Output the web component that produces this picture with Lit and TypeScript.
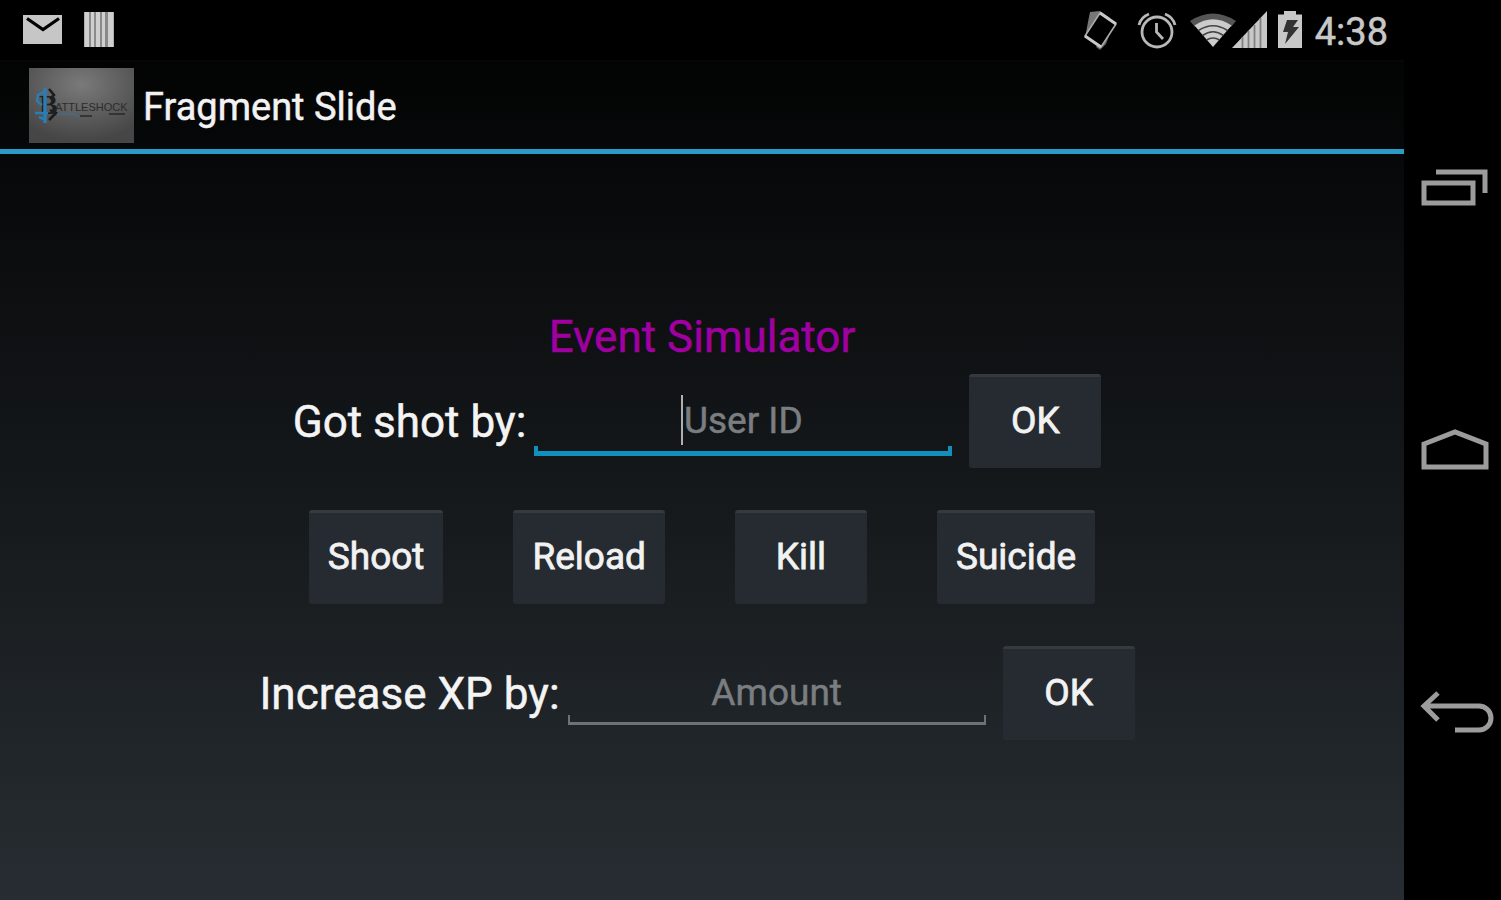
import { LitElement, html, css, svg } from "lit";
import { customElement } from "lit/decorators.js";

@customElement("status-bar")
class StatusBar extends LitElement {
  static styles = css`
    :host {
      display: flex;
      align-items: center;
      justify-content: space-between;
      height: 60px;
      padding: 0 16px 0 20px;
      box-sizing: border-box;
      background: #000;
      color: #c8c8c8;
    }
    .group {
      display: flex;
      align-items: center;
    }
    .notifications {
      gap: 16px;
    }
    svg {
      display: block;
    }
    .time {
      font-size: 38px;
      line-height: 56px;
      padding-top: 3px;
      margin-left: 4px;
      -webkit-text-stroke: 0.5px #c8c8c8;
    }
  `;

  render() {
    return html`
      <div class="group notifications">
        <svg width="44" height="44" viewBox="0 0 44 44" role="img" aria-label="New mail">
          <rect x="3" y="7" width="39" height="29" fill="#c6c6c6" />
          <path d="M7 10.500L23 21.500L39 10.500" fill="none" stroke="#000" stroke-width="3.200" />
        </svg>
        <svg width="36" height="44" viewBox="0 0 36 44" role="img" aria-label="Barcode">
          <rect x="4" y="4" width="30" height="35" fill="#8a8a8a" />
          <path d="M4.500 4h4.500v35h-4.500zM11 4h3v35h-3zM16 4h4v35h-4zM22 4h3v35h-3zM28 4h5.500v35h-5.500z" fill="#cfcfcf" />
        </svg>
      </div>
      <div class="group">
        <svg width="232" height="44" viewBox="0 0 232 44" role="img" aria-label="Rotation, alarm, wi-fi, signal, battery">
          <path d="M11 4L21 3L31 10L22 12L11 22L6 30L9 14Z" fill="#777" />
          <path d="M34 17L27 36L21 42L17 39Z" fill="#666" />
          <path d="M21 5L37 16L22 39L6 28Z" fill="#000" stroke="#aaa" stroke-width="1.600" stroke-linejoin="round" />
          <path d="M6 28L22 39M21 5L37 16" stroke="#c8c8c8" stroke-width="3" />

          <g fill="none" stroke="#b8b8b8">
            <circle cx="78" cy="24" r="15" stroke-width="2.800" />
            <path d="M77.500 15V24L84 31" stroke-width="2.800" />
            <path d="M60 17Q62 9 70 6M86 6Q94 9 96 17" stroke-width="2.800" />
          </g>

          <path d="M111 13Q134 -2 157 13L152 19Q134 8 116 19Z" fill="#555" />
          <path d="M115.500 17.500Q134 5 152.500 17.500L134 39Z" fill="#ccc" />
          <g fill="none" stroke="#444" stroke-width="1.600">
            <path d="M119.500 22.500Q134 13 148.500 22.500" />
            <path d="M123.500 27.500Q134 20 144.500 27.500" />
            <path d="M127.500 32Q134 28 140.500 32" />
          </g>

          <path d="M153 40L188 3V40Z" fill="#c8c8c8" />
          <path d="M163.500 29V40M169.500 23V40M175.500 17V40M181.500 10V40" stroke="#808080" stroke-width="1.800" />

          <path d="M199 6.500h6V3h12v3.500h6V40h-24z" fill="#c8c8c8" />
          <path d="M208 12h11l-5 7h6l-14 17l3-12h-5z" fill="#333" />
        </svg>
        <span class="time">4:38</span>
      </div>
    `;
  }
}

@customElement("action-bar")
class ActionBar extends LitElement {
  static styles = css`
    :host {
      display: flex;
      align-items: center;
      gap: 9px;
      height: 94px;
      padding: 0 29px;
      box-sizing: border-box;
      border-top: 2px solid #060606;
      border-bottom: 5px solid #2c9cc6;
    }
    .logo {
      display: block;
    }
    .mark {
      font: 11px "Liberation Sans", sans-serif;
      fill: #2c2c2c;
    }
    .initial {
      font: bold 28px "Liberation Serif", serif;
      fill: #1d1f21;
    }
    h1 {
      margin: 0;
      padding-top: 2px;
      font-size: 38px;
      line-height: 48px;
      font-weight: 400;
      color: #f2f2f2;
      -webkit-text-stroke: 0.5px #f2f2f2;
    }
  `;

  render() {
    return html`
      <svg class="logo" width="105" height="75" viewBox="0 0 105 75" role="img" aria-label="Battleshock">
        <defs>
          <radialGradient id="shade" cx="50%" cy="22%" r="75%">
            <stop offset="0" stop-color="#7a7a7a" />
            <stop offset="1" stop-color="#464646" />
          </radialGradient>
        </defs>
        <rect width="105" height="75" fill="url(#shade)" />
        <path d="M20 21l5 6l-4 4M20 52l7-7l-6-3" fill="none" stroke="#1c1c1c" stroke-width="2.500" />
        <text class="initial" x="10" y="46">B</text>
        <g fill="none" stroke="#2b7db5">
          <path d="M16 20V55" stroke-width="3.500" />
          <path d="M15 24L9 27L8 33L13 37M6 45H19M10 49L17 52" stroke-width="2.500" />
        </g>
        <text class="mark" x="26" y="43">ATTLESHOCK</text>
        <path d="M28 46H44L50 49" fill="none" stroke="#3575a0" />
        <path d="M51 48H63M80 46H96" fill="none" stroke="#292929" stroke-width="1.500" />
      </svg>
      <h1>Fragment Slide</h1>
    `;
  }
}

@customElement("event-simulator")
class EventSimulator extends LitElement {
  static styles = css`
    :host {
      display: flex;
      flex-direction: column;
      justify-content: center;
      padding-bottom: 6px;
      box-sizing: border-box;
    }
    h2 {
      margin: 0 0 9px;
      font-size: 44px;
      line-height: 56px;
      font-weight: 400;
      text-align: center;
      color: #a000a0;
      -webkit-text-stroke: 0.5px #a000a0;
    }
    form {
      display: flex;
      flex-direction: column;
      gap: 42px;
    }
    .row {
      display: flex;
      align-items: center;
      justify-content: center;
    }
    .entry {
      padding-right: 10px;
    }
    .actions {
      gap: 70px;
    }
    label {
      padding-top: 3px;
      font-size: 44px;
      line-height: 56px;
      color: #f4f4f4;
      -webkit-text-stroke: 0.5px #f4f4f4;
    }
    .field {
      position: relative;
      width: 30%;
      max-width: 418px;
      margin: 0 17px 0 8px;
    }
    input {
      --line: #6d7275;
      --thick: 3px;
      --tick: 2px;
      --rise: 3px;
      display: block;
      width: 100%;
      height: 70px;
      padding: 0;
      box-sizing: border-box;
      border: 0;
      outline: 0;
      border-radius: 0;
      background:
        linear-gradient(var(--line), var(--line)) left 0 bottom var(--rise) / 100% var(--thick) no-repeat,
        linear-gradient(var(--line), var(--line)) left 0 bottom var(--rise) / var(--tick) 10px no-repeat,
        linear-gradient(var(--line), var(--line)) right 0 bottom var(--rise) / var(--tick) 10px no-repeat;
      font: inherit;
      font-size: 37px;
      text-align: center;
      color: #f2f2f2;
    }
    .active input {
      --line: #118fbd;
      --thick: 5px;
      --tick: 4px;
      --rise: 0px;
    }
    .active::after {
      content: "";
      position: absolute;
      left: calc(50% - 62px);
      top: 9px;
      width: 2px;
      height: 50px;
      background: #b0b0b0;
    }
    input::placeholder {
      color: #7b7e80;
      opacity: 1;
      -webkit-text-stroke: 0.5px #7b7e80;
    }
    button {
      min-width: 132px;
      height: 94px;
      padding: 0 19px 3px;
      box-sizing: border-box;
      border: 0;
      border-top: 3px solid #343a3e;
      border-radius: 3px;
      background: #252b30;
      font: inherit;
      font-size: 37px;
      line-height: 48px;
      color: #f2f2f2;
      -webkit-text-stroke: 0.8px #f2f2f2;
    }
  `;

  render() {
    return html`
      <h2>Event Simulator</h2>
      <form @submit=${(e: Event) => e.preventDefault()}>
        <div class="row entry">
          <label for="shooter">Got shot by:</label>
          <div class="field active"><input id="shooter" type="text" placeholder="User ID" /></div>
          <button type="submit">OK</button>
        </div>
        <div class="row actions">
          ${["Shoot", "Reload", "Kill", "Suicide"].map(
            (name) => html`<button type="button">${name}</button>`
          )}
        </div>
        <div class="row entry">
          <label for="amount">Increase XP by:</label>
          <div class="field"><input id="amount" type="text" placeholder="Amount" /></div>
          <button type="submit">OK</button>
        </div>
      </form>
    `;
  }
}

const navIcons = [
  { label: "Recent apps", shape: svg`<path d="M17 12H66V33M5 23H54V43H5Z" />` },
  { label: "Home", shape: svg`<path d="M5 22L36 10L67 22V45H5Z" />` },
  { label: "Back", shape: svg`<path d="M19 9L5 22L19 36M5 22H60A12 12 0 0 1 60 46H36" />` },
];

@customElement("navigation-bar")
class NavigationBar extends LitElement {
  static styles = css`
    :host {
      display: flex;
      flex-direction: column;
      justify-content: center;
      background: #000;
    }
    button {
      display: flex;
      align-items: center;
      justify-content: flex-end;
      height: 262px;
      padding: 0 4px 0 0;
      border: 0;
      background: none;
    }
    svg {
      fill: none;
      stroke: #9c9c9c;
      stroke-width: 5;
    }
  `;

  render() {
    return navIcons.map(
      (icon) => html`
        <button type="button" aria-label=${icon.label}>
          <svg width="78" height="56" viewBox="0 0 78 56" aria-hidden="true">${icon.shape}</svg>
        </button>
      `
    );
  }
}

@customElement("app-root")
class AppRoot extends LitElement {
  static styles = css`
    :host {
      display: grid;
      grid-template-columns: 1fr 97px;
      min-height: 100vh;
      background: #000;
      font-family: Roboto, "Noto Sans", sans-serif;
    }
    .screen {
      display: grid;
      grid-template-rows: auto auto 1fr;
      background: linear-gradient(#000, #272d32);
    }
  `;

  render() {
    return html`
      <main class="screen">
        <status-bar></status-bar>
        <action-bar></action-bar>
        <event-simulator></event-simulator>
      </main>
      <navigation-bar></navigation-bar>
    `;
  }
}
